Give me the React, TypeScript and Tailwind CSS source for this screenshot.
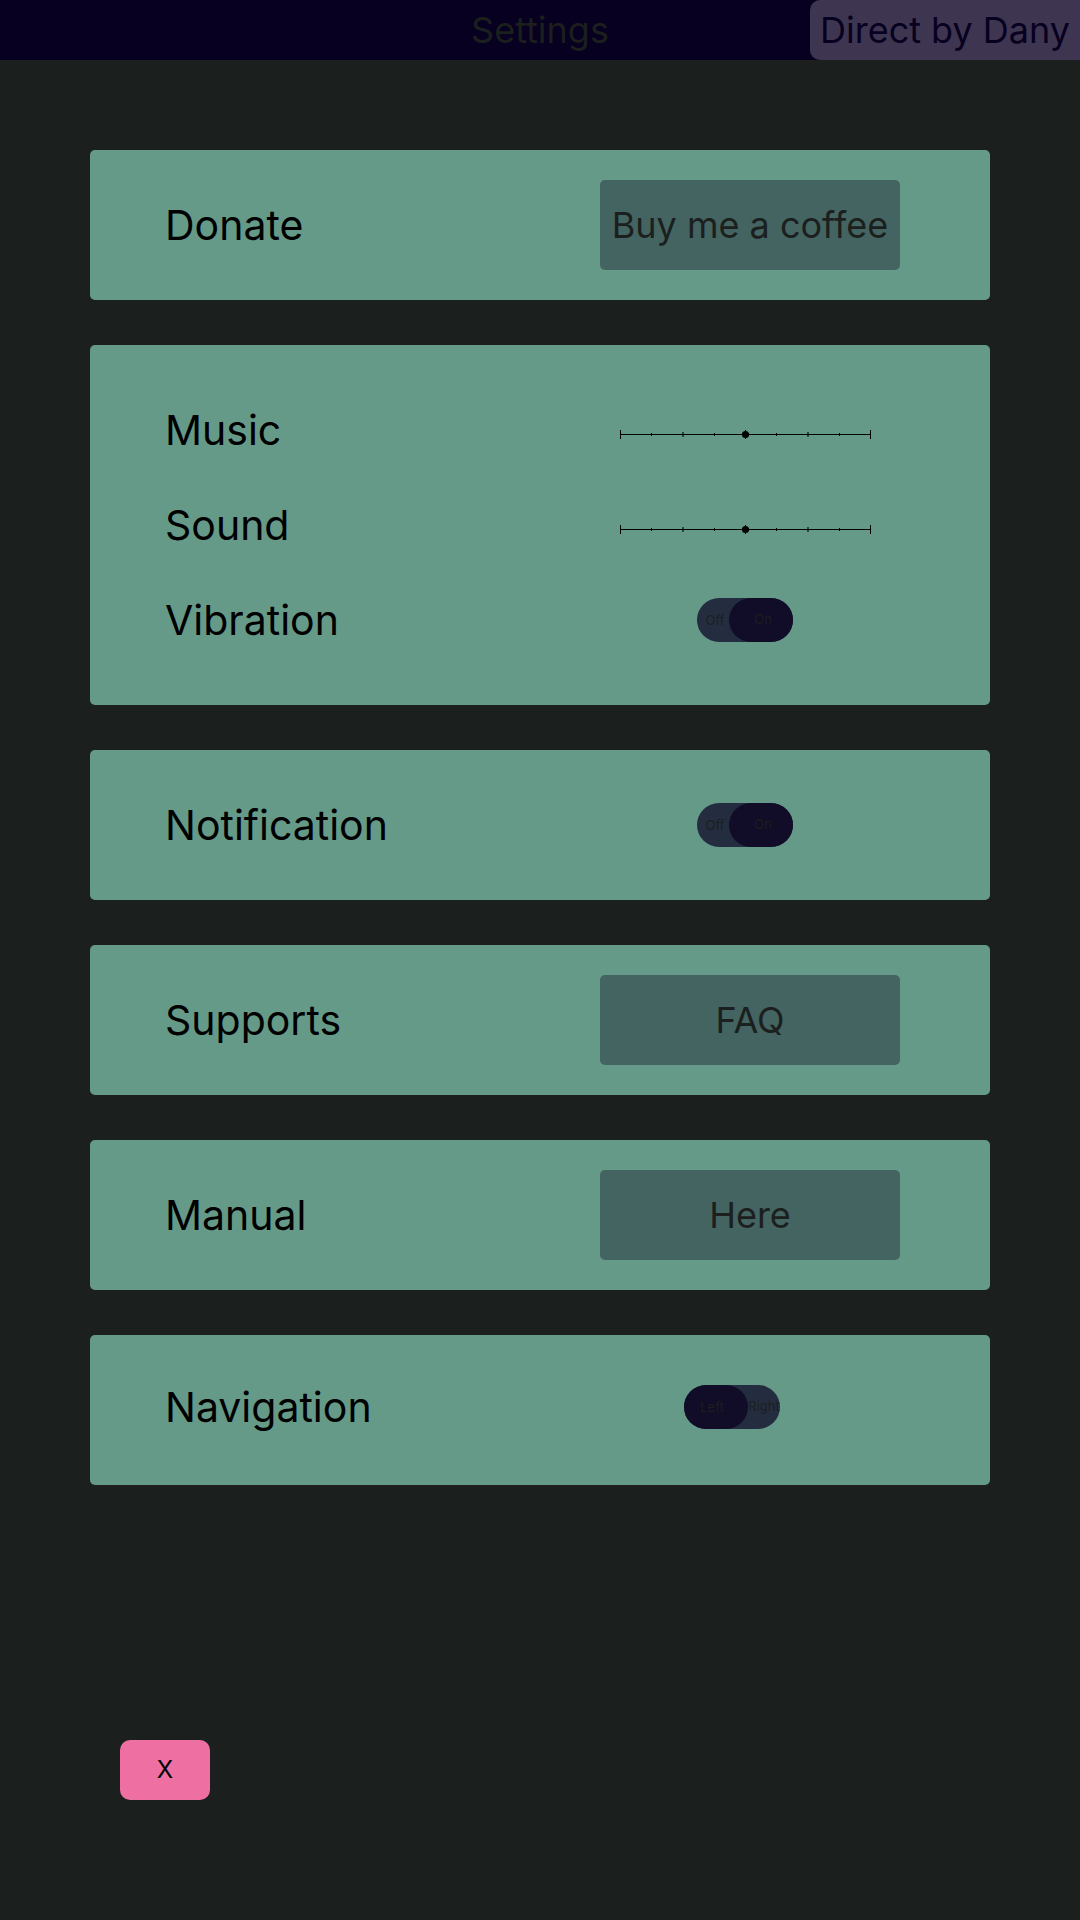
import { useState, type ReactNode } from "react";

function Card({
  children,
  size = "normal",
}: {
  children: ReactNode;
  size?: "normal" | "tall" | "raised";
}) {
  const base = "flex flex-col justify-center rounded-[5px] bg-[#669a88] pr-[90px] pl-[75px]";
  const sizes = {
    normal: "min-h-[150px]",
    tall: "min-h-[360px]",
    raised: "min-h-[150px] pb-[6px]",
  };
  return <section className={`${base} ${sizes[size]}`}>{children}</section>;
}

function Row({ label, id, children }: { label: string; id: string; children: ReactNode }) {
  return (
    <div className="flex min-h-[95px] items-center justify-between">
      <label htmlFor={id} className="text-[41px] leading-[50px] text-black">
        {label}
      </label>
      <div className="flex w-[300px] justify-center">{children}</div>
    </div>
  );
}

function ActionButton({ id, children }: { id: string; children: ReactNode }) {
  return (
    <button
      id={id}
      type="button"
      className="h-[90px] w-full rounded-[5px] bg-[#446462] text-[36px] leading-[44px] whitespace-nowrap text-[#1b1f1d]"
    >
      {children}
    </button>
  );
}

function StepSlider({ id }: { id: string }) {
  const [value, setValue] = useState(4);
  const x = 6 + Math.round(value * 31.25);
  return (
    <div className="relative mt-2 mr-[10px] h-6 w-[262px]">
      <svg viewBox="0 0 262 24" className="h-full w-full" aria-hidden="true">
        <g shapeRendering="crispEdges" fill="#000">
          <rect x="6" y="12" width="250" height="1" />
          <rect x="6" y="8" width="1" height="9" />
          <rect x="256" y="8" width="1" height="9" />
          {[37, 100, 162, 225].map((t) => (
            <rect key={t} x={t} y="11" width="1" height="3" />
          ))}
          {[68, 193].map((t) => (
            <rect key={t} x={t} y="10" width="2" height="5" fillOpacity="0.55" />
          ))}
          <rect x={x} y="8" width="1" height="9" />
        </g>
        <circle cx={x + 0.5} cy="12.5" r="3.6" fill="#000" />
      </svg>
      <input
        id={id}
        type="range"
        min={0}
        max={8}
        value={value}
        onChange={(e) => setValue(Number(e.target.value))}
        className="absolute inset-0 h-full w-full cursor-pointer opacity-0"
      />
    </div>
  );
}

function Toggle({
  id,
  left,
  right,
  initial,
}: {
  id: string;
  left: string;
  right: string;
  initial: boolean;
}) {
  const [on, setOn] = useState(initial);
  return (
    <div className="relative flex h-11 w-24 rounded-full bg-[#242d40] text-[13px] leading-4 text-[#1b1f1d]">
      <span
        className={
          on
            ? "flex h-11 w-8 items-center justify-center pl-1"
            : "flex h-11 w-16 items-center justify-center rounded-full bg-[#110c28] pr-2"
        }
      >
        {left}
      </span>
      <span
        className={
          on
            ? "flex h-11 w-16 items-center justify-center rounded-full bg-[#110c28] pb-[2px] pl-1"
            : "flex h-11 w-8 items-center justify-center pb-[2px]"
        }
      >
        {right}
      </span>
      <input
        id={id}
        type="checkbox"
        role="switch"
        checked={on}
        onChange={(e) => setOn(e.target.checked)}
        className="absolute inset-0 h-full w-full cursor-pointer opacity-0"
      />
    </div>
  );
}

export default function App() {
  return (
    <div className="flex min-h-screen flex-col bg-[#1b1f1d] font-['Inter',sans-serif]">
      <header className="grid h-[60px] grid-cols-[1fr_auto_1fr] items-center bg-[#070021] text-[36px] leading-[44px]">
        <h1 className="col-start-2 text-[#1b1f1d]">Settings</h1>
        <a
          href="#dany"
          className="flex h-[60px] w-[270px] items-center justify-center justify-self-end rounded-l-[10px] bg-[#3e3650] whitespace-nowrap text-[#070021]"
        >
          Direct by Dany
        </a>
      </header>

      <main className="flex flex-col gap-[45px] px-[90px] pt-[90px]">
        <Card>
          <Row label="Donate" id="donate">
            <ActionButton id="donate">Buy me a coffee</ActionButton>
          </Row>
        </Card>
        <Card size="tall">
          <Row label="Music" id="music">
            <StepSlider id="music" />
          </Row>
          <Row label="Sound" id="sound">
            <StepSlider id="sound" />
          </Row>
          <Row label="Vibration" id="vibration">
            <div className="mr-[10px]">
              <Toggle id="vibration" left="Off" right="On" initial={true} />
            </div>
          </Row>
        </Card>
        <Card>
          <Row label="Notification" id="notification">
            <div className="mr-[10px]">
              <Toggle id="notification" left="Off" right="On" initial={true} />
            </div>
          </Row>
        </Card>
        <Card>
          <Row label="Supports" id="supports">
            <ActionButton id="supports">FAQ</ActionButton>
          </Row>
        </Card>
        <Card>
          <Row label="Manual" id="manual">
            <ActionButton id="manual">Here</ActionButton>
          </Row>
        </Card>
        <Card size="raised">
          <Row label="Navigation" id="navigation">
            <div className="mr-9">
              <Toggle id="navigation" left="Left" right="Right" initial={false} />
            </div>
          </Row>
        </Card>
      </main>

      <footer className="mt-auto px-[120px] pt-[45px] pb-[120px]">
        <button
          type="button"
          aria-label="Close"
          className="h-[60px] w-[90px] rounded-[10px] bg-[#ee70a3] text-[24px] leading-[30px] text-black"
        >
          X
        </button>
      </footer>
    </div>
  );
}
